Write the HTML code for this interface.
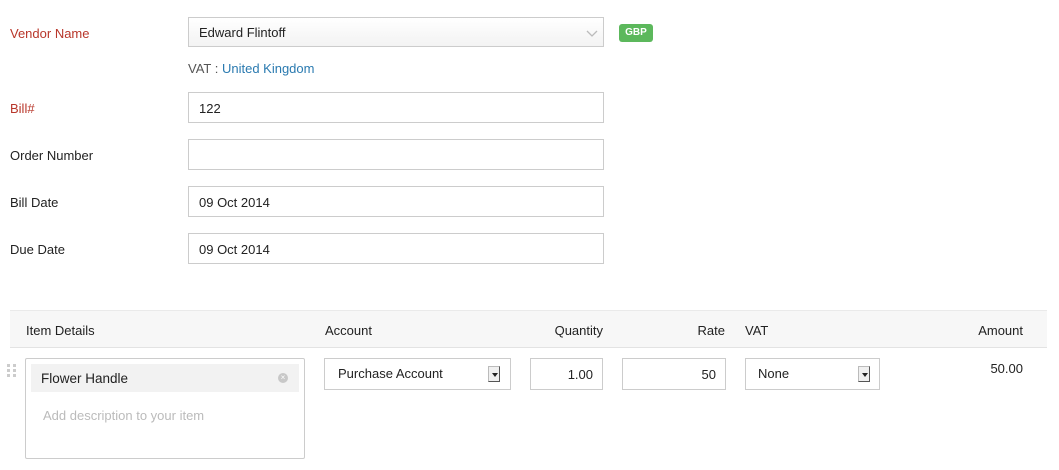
<!DOCTYPE html>
<html><head><style>
body{margin:0;width:1059px;height:470px;background:#fff;font-family:"Liberation Sans",sans-serif;font-size:13px;color:#222;position:relative;overflow:hidden}
.a{position:absolute}
.lbl{position:absolute;left:10px;line-height:16px}
.red{color:#b8362a}
.in{position:absolute;left:188px;width:416px;height:31px;border:1px solid #ccc;box-sizing:border-box;background:#fff;line-height:31px;padding-left:10px}
.hd{position:absolute;top:322px;line-height:16px}
.arr{position:absolute;width:12px;height:16px;border:1px solid #bbb;border-right-color:#555;border-bottom-color:#555;background:#f0f0f0;box-sizing:border-box}
.arr:after{content:"";position:absolute;left:3px;top:6px;border:3px solid transparent;border-top:4px solid #222;border-bottom:0}
</style></head><body>
<div class="lbl red" style="top:26px">Vendor Name</div>
<div class="in" style="top:17px;height:30px;line-height:30px;background:linear-gradient(#fff,#f3f3f3)">Edward Flintoff
<svg class="a" style="left:397px;top:12px" width="12" height="8"><path d="M1 1l5 5 5-5" fill="none" stroke="#bbb" stroke-width="1.3"/></svg></div>
<div class="a" style="left:619px;top:24px;width:34px;height:18px;background:#5cb85c;border-radius:3px;color:#fff;font-weight:bold;font-size:10px;line-height:18px;text-align:center">GBP</div>
<div class="a" style="left:188px;top:61px;color:#555">VAT : <span style="color:#2a7ab0">United Kingdom</span></div>
<div class="lbl red" style="top:101px">Bill#</div>
<div class="in" style="top:92px">122</div>
<div class="lbl" style="top:148px">Order Number</div>
<div class="in" style="top:139px"></div>
<div class="lbl" style="top:195px">Bill Date</div>
<div class="in" style="top:186px">09 Oct 2014</div>
<div class="lbl" style="top:242px">Due Date</div>
<div class="in" style="top:233px">09 Oct 2014</div>

<div class="a" style="left:10px;top:310px;width:1037px;height:38px;background:#f7f7f7;border-top:1px solid #eaeaea;border-bottom:1px solid #e3e3e3;box-sizing:border-box"></div>
<div class="hd" style="left:26px;top:323px">Item Details</div>
<div class="hd" style="left:325px;top:323px">Account</div>
<div class="hd" style="left:503px;width:100px;text-align:right;top:323px">Quantity</div>
<div class="hd" style="left:625px;width:100px;text-align:right;top:323px">Rate</div>
<div class="hd" style="left:745px;top:323px">VAT</div>
<div class="hd" style="left:923px;width:100px;text-align:right;top:323px">Amount</div>

<svg class="a" style="left:7px;top:364px" width="12" height="14"><g fill="#ccc"><rect x="0" y="0" width="3" height="3"/><rect x="6" y="0" width="3" height="3"/><rect x="0" y="5" width="3" height="3"/><rect x="6" y="5" width="3" height="3"/><rect x="0" y="10" width="3" height="3"/><rect x="6" y="10" width="3" height="3"/></g></svg>
<div class="a" style="left:25px;top:358px;width:280px;height:101px;border:1px solid #ccc;box-sizing:border-box;border-radius:2px"></div>
<div class="a" style="left:31px;top:364px;width:268px;height:28px;background:#f2f2f2;line-height:29px;padding-left:10px;box-sizing:border-box;font-size:13.5px">Flower Handle
<div class="a" style="left:247px;top:9px;width:10px;height:10px;border-radius:50%;background:#c8c8c8;color:#fff;font-size:8px;line-height:10px;text-align:center">×</div></div>
<div class="a" style="left:43px;top:408px;color:#bbb">Add description to your item</div>

<div class="a" style="left:324px;top:358px;width:187px;height:32px;border:1px solid #ccc;box-sizing:border-box;line-height:29px;padding-left:13px">Purchase Account<div class="arr" style="left:163px;top:7px"></div></div>
<div class="a" style="left:530px;top:358px;width:73px;height:32px;border:1px solid #ccc;box-sizing:border-box;line-height:32px;text-align:right;padding-right:9px">1.00</div>
<div class="a" style="left:622px;top:358px;width:104px;height:32px;border:1px solid #ccc;box-sizing:border-box;line-height:32px;text-align:right;padding-right:9px">50</div>
<div class="a" style="left:745px;top:358px;width:135px;height:32px;border:1px solid #ccc;box-sizing:border-box;line-height:29px;padding-left:12px">None<div class="arr" style="left:112px;top:7px"></div></div>
<div class="a" style="left:923px;top:361px;width:100px;text-align:right">50.00</div>
</body></html>
